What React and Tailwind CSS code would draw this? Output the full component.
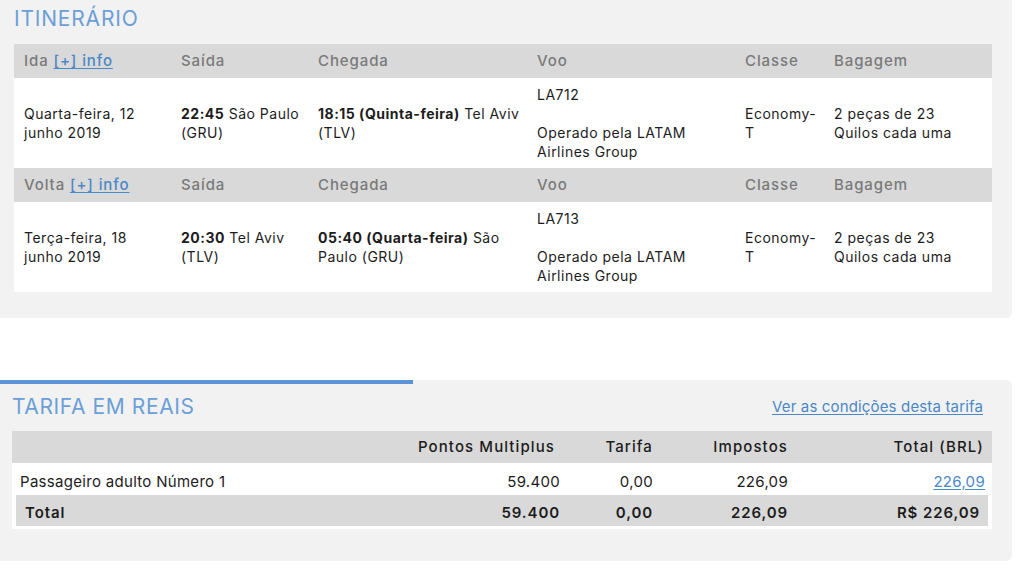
import React from "react";

const itin = [
  {
    label: "Ida",
    date: ["Quarta-feira, 12", "junho 2019"],
    dep: { time: "22:45", rest: ["São Paulo", "(GRU)"] },
    arr: { time: "18:15 (Quinta-feira)", rest: ["Tel Aviv", "(TLV)"] },
    flight: "LA712",
  },
  {
    label: "Volta",
    date: ["Terça-feira, 18", "junho 2019"],
    dep: { time: "20:30", rest: ["Tel Aviv", "(TLV)"] },
    arr: { time: "05:40 (Quarta-feira)", rest: ["São", "Paulo (GRU)"] },
    flight: "LA713",
  },
];

const grid = "grid grid-cols-[157px_137px_219px_208px_89px_168px]";

function Leg({ leg }) {
  return (
    <>
      <div className={`${grid} h-[34px] items-center bg-[#d9d9d9] text-[15px] font-medium tracking-[0.9px] text-[#7a7a7a]`}>
        <div className="pl-[10px]">
          {leg.label}{" "}
          <a className="text-[#4b88c7] underline underline-offset-2">[+] info</a>
        </div>
        <div className="pl-[10px]">Saída</div>
        <div className="pl-[10px]">Chegada</div>
        <div className="pl-[10px]">Voo</div>
        <div className="pl-[10px]">Classe</div>
        <div className="pl-[10px]">Bagagem</div>
      </div>
      <div className={`${grid} h-[90px] items-center bg-white text-[14px] leading-[19px] tracking-[0.5px] text-[#1c1c1c]`}>
        <div className="pl-[10px]">
          {leg.date[0]}
          <br />
          {leg.date[1]}
        </div>
        <div className="pl-[10px]">
          <b className="font-bold">{leg.dep.time}</b> {leg.dep.rest[0]}
          <br />
          {leg.dep.rest[1]}
        </div>
        <div className="pl-[10px]">
          <b className="font-bold">{leg.arr.time}</b> {leg.arr.rest[0]}
          <br />
          {leg.arr.rest[1]}
        </div>
        <div className="pl-[10px]">
          {leg.flight}
          <br />
          <br />
          Operado pela LATAM
          <br />
          Airlines Group
        </div>
        <div className="pl-[10px]">
          Economy-
          <br />T
        </div>
        <div className="pl-[10px]">
          2 peças de 23
          <br />
          Quilos cada uma
        </div>
      </div>
    </>
  );
}

export default function App() {
  return (
    <div className="w-[1024px] h-[566px] overflow-hidden bg-white font-['Inter',sans-serif]">
      <section className="w-[1012px] rounded-br-md bg-[#f2f2f2] pl-[14px] pr-[20px] pt-[6px] pb-[26px]">
        <h2 className="mb-[12px] text-[21px] leading-[26px] tracking-[0.8px] text-[#6a9fd8]">ITINERÁRIO</h2>
        <div>
          {itin.map((l) => (
            <Leg key={l.label} leg={l} />
          ))}
        </div>
      </section>

      <div className="h-[62px]" />

      <section className="w-[1012px] rounded-r-md bg-[#f2f2f2] pb-[32px]">
        <div className="h-[4px] w-[413px] bg-[#5b93d6]" />
        <div className="mt-[10px] mb-[11px] flex items-center justify-between pl-[12px] pr-[29px]">
          <h2 className="text-[21px] leading-[26px] tracking-[0.6px] text-[#6a9fd8]">TARIFA EM REAIS</h2>
          <a className="text-[15px] tracking-[0.15px] text-[#4b88c7] underline underline-offset-2">Ver as condições desta tarifa</a>
        </div>
        <div className="ml-[12px] mr-[20px] bg-white pb-[3px]">
          <div className="grid h-[32px] grid-cols-[396px_162px_93px_135px_1fr] items-center whitespace-nowrap bg-[#d9d9d9] text-[15px] font-medium tracking-[1.1px] text-[#1c1c1c]">
            <div />
            <div className="pr-[15px] text-right">Pontos Multiplus</div>
            <div className="pr-[10px] text-right">Tarifa</div>
            <div className="pr-[10px] text-right">Impostos</div>
            <div className="pr-[8px] text-right">Total (BRL)</div>
          </div>
          <div className="grid h-[32px] grid-cols-[396px_162px_93px_135px_1fr] items-center whitespace-nowrap pt-[6px] text-[15px] tracking-[0.3px] text-[#1c1c1c]">
            <div className="pl-[8px]">Passageiro adulto Número 1</div>
            <div className="pr-[10px] text-right">59.400</div>
            <div className="pr-[10px] text-right">0,00</div>
            <div className="pr-[10px] text-right">226,09</div>
            <div className="pr-[7px] text-right">
              <a className="text-[#4b88c7] underline underline-offset-2">226,09</a>
            </div>
          </div>
          <div className="mx-[4px] grid h-[31px] grid-cols-[392px_162px_93px_135px_1fr] items-center whitespace-nowrap bg-[#d9d9d9] pt-[5px] text-[15px] font-semibold tracking-[0.9px] text-[#1c1c1c]">
            <div className="pl-[9px]">Total</div>
            <div className="pr-[10px] text-right">59.400</div>
            <div className="pr-[10px] text-right">0,00</div>
            <div className="pr-[10px] text-right">226,09</div>
            <div className="pr-[8px] text-right">R$ 226,09</div>
          </div>
        </div>
      </section>
    </div>
  );
}
